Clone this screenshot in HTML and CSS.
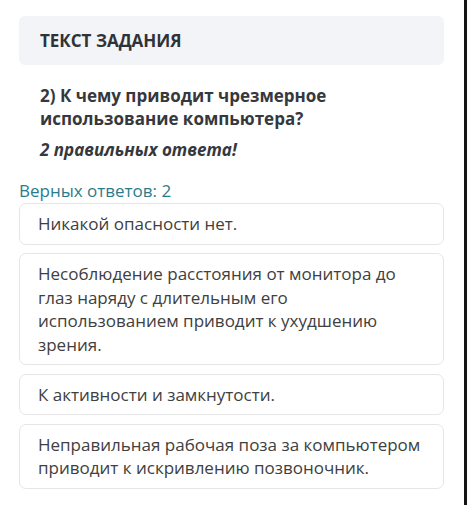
FILE: index.html
```html
<!DOCTYPE html>
<html>
<head>
<meta charset="utf-8"/>
<link rel="stylesheet" href="styles.css">
<title>Текст задания</title>
</head>
<body>
<div class="page">
  <div class="content">
    <div class="task-head">ТЕКСТ ЗАДАНИЯ</div>
    <div class="question">
      <p class="question-text">2) К чему приводит чрезмерное использование компьютера?</p>
      <p class="question-note">2 правильных ответа!</p>
    </div>
    <div class="answers-count">Верных ответов: 2</div>
    <div class="answers">
      <div class="answer">Никакой опасности нет.</div>
      <div class="answer">Несоблюдение расстояния от монитора до глаз наряду с длительным его использованием приводит к ухудшению зрения.</div>
      <div class="answer">К активности и замкнутости.</div>
      <div class="answer">Неправильная рабочая поза за компьютером приводит к искривлению позвоночник.</div>
    </div>
  </div>
  <div class="scrollbar"></div>
</div>
</body>
</html>
```

FILE: styles.css
```css
html, body {
  margin: 0;
  padding: 0;
  background: #ffffff;
}

body {
  font-family: "Open Sans", "Noto Sans", sans-serif;
  color: #333333;
}

.page {
  display: flex;
  height: 505px;
}

.content {
  flex: 1;
  padding: 16px 0 0 19px;
}

.scrollbar {
  width: 3px;
  background: #141414;
}

.task-head {
  width: 425px;
  box-sizing: border-box;
  background: #f3f4f7;
  border-radius: 6px;
  padding: 13px 21px;
  font-size: 17px;
  font-weight: 700;
  line-height: 23px;
  color: #2f3237;
}

.question {
  padding: 19px 21px 0 21px;
}

.question-text {
  margin: 0;
  width: 330px;
  font-size: 17px;
  font-weight: 700;
  line-height: 23px;
  color: #35383d;
}

.question-note {
  margin: 8px 0 0 0;
  font-size: 17px;
  font-weight: 700;
  font-style: italic;
  line-height: 23px;
  color: #35383d;
}

.answers-count {
  margin-top: 18px;
  font-size: 17px;
  line-height: 23px;
  color: #2b7c8a;
}

.answers {
  width: 425px;
  display: flex;
  flex-direction: column;
  gap: 8.5px;
  margin-top: 1px;
}

.answer {
  border: 1px solid #e6e6e6;
  border-radius: 7px;
  padding: 8px 18px;
  font-size: 17px;
  line-height: 23.5px;
  color: #404040;
}
```
